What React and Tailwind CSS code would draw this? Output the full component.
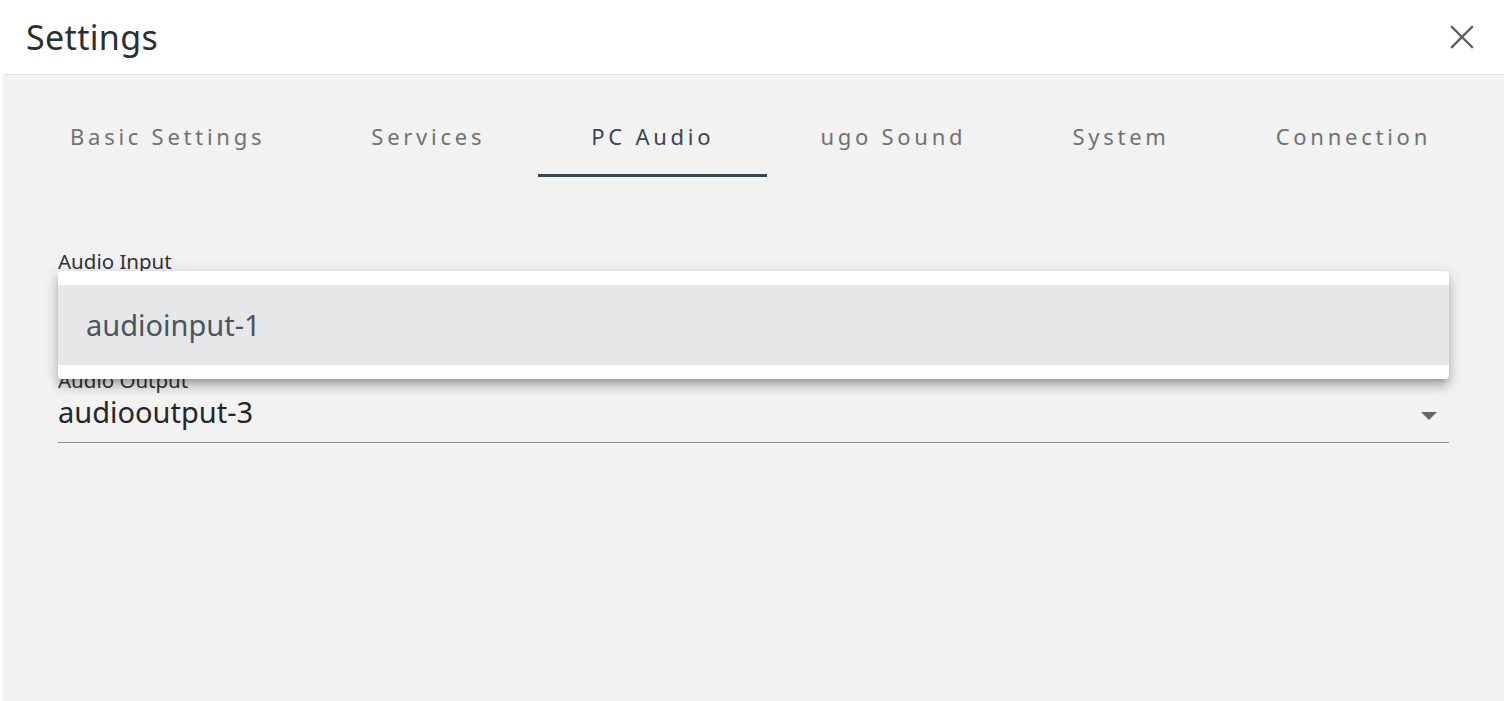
import { useState } from 'react';

const tabs = ['Basic Settings', 'Services', 'PC Audio', 'ugo Sound', 'System', 'Connection'];

const CloseIcon = () => (
  <svg width="24" height="24" viewBox="0 0 24 24" className="text-[#5f5f5f]">
    <path d="M2 2 L22 22 M22 2 L2 22" stroke="currentColor" strokeWidth="2.4" strokeLinecap="square" />
  </svg>
);

const SelectField = ({ label, value, hidden = false, className = '' }) => (
  <div className={className}>
    <div className="text-[20.5px] leading-[20px] text-[#333]">{label}</div>
    <div className="flex h-[53px] items-start justify-between border-b border-[#8c8c8c] pt-[5px]">
      <span className={`text-[29px] leading-[34px] text-[#262626] ${hidden ? 'invisible' : ''}`}>{value}</span>
      <svg width="16" height="8" viewBox="0 0 16 8" className="mr-[12px] mt-[17px] text-[#666]">
        <path d="M0 0 L16 0 L8 8 Z" fill="currentColor" />
      </svg>
    </div>
  </div>
);

export default function App() {
  const [active, setActive] = useState('PC Audio');

  return (
    <div className="h-[701px] w-full overflow-hidden bg-white font-['Noto_Sans',sans-serif]">
      <div className="flex h-[74px] items-center justify-between pl-[26px] pr-[33px]">
        <h1 className="text-[34px] leading-none tracking-[0.01em] text-[#2e2e2e]">Settings</h1>
        <button className="flex items-center justify-center">
          <CloseIcon />
        </button>
      </div>

      <div className="mx-[3px] h-[627px] border-t border-[#e3e3e3] bg-[#f2f2f2]">
        <div className="mt-[22px] flex pl-[14px] pr-[20px]">
          {tabs.map((tab) => (
            <button
              key={tab}
              onClick={() => setActive(tab)}
              className={`relative flex h-[80px] flex-auto items-center justify-center pb-[2px] text-[22px] tracking-[0.17em] ${
                active === tab ? 'text-[#37474f]' : 'text-[#717171]'
              }`}
            >
              {tab}
              {active === tab && <span className="absolute bottom-0 left-0 right-0 h-[3px] bg-[#37474f]" />}
            </button>
          ))}
        </div>

        <div className="relative mx-[55px] mt-[74px]">
          <SelectField label="Audio Input" value="audioinput-1" hidden />
          <SelectField label="Audio Output" value="audiooutput-3" className="mt-[46px]" />

          <div className="absolute left-0 right-0 top-[20px] rounded-[4px] bg-white py-[14px] shadow-[0_5px_5px_-3px_rgba(0,0,0,0.2),0_8px_10px_1px_rgba(0,0,0,0.14),0_3px_14px_2px_rgba(0,0,0,0.12)]">
            <div className="flex h-[80px] items-center bg-[#e6e7e8] px-[28px] text-[29px] text-[#4b555d]">audioinput-1</div>
          </div>
        </div>
      </div>
    </div>
  );
}
